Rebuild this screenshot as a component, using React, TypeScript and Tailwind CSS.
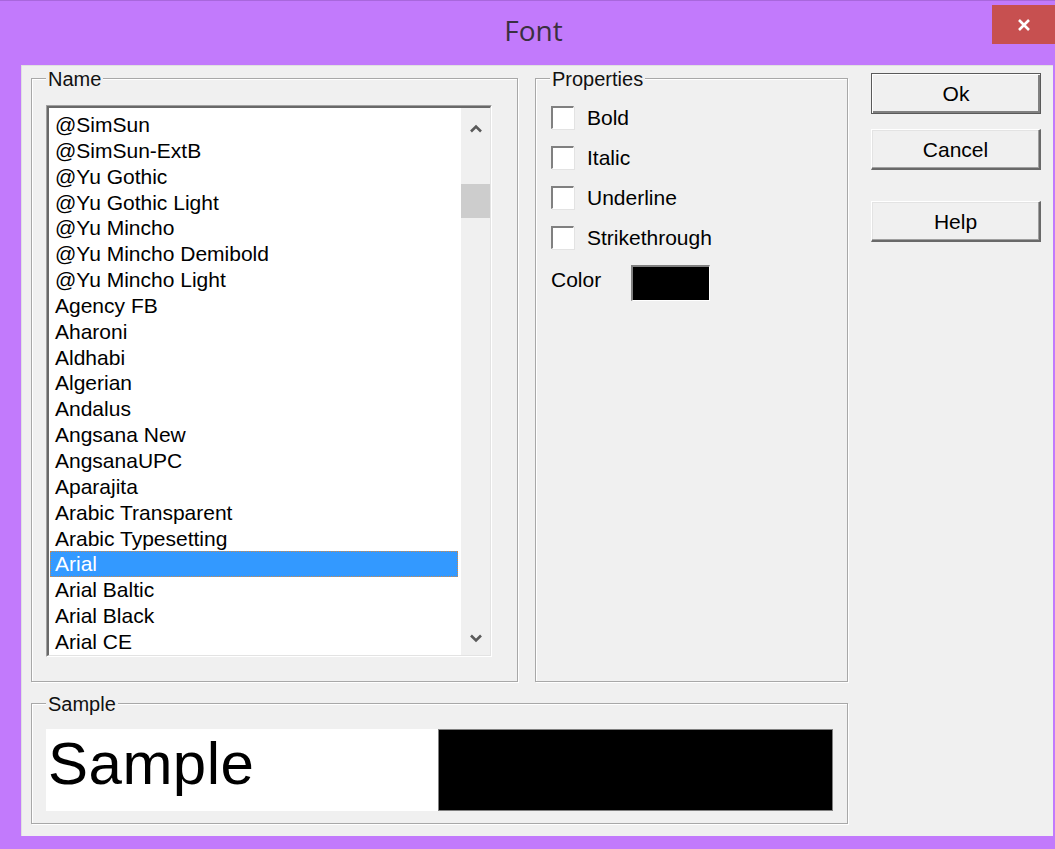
import React from "react";

const FONTS = [
  "@SimSun",
  "@SimSun-ExtB",
  "@Yu Gothic",
  "@Yu Gothic Light",
  "@Yu Mincho",
  "@Yu Mincho Demibold",
  "@Yu Mincho Light",
  "Agency FB",
  "Aharoni",
  "Aldhabi",
  "Algerian",
  "Andalus",
  "Angsana New",
  "AngsanaUPC",
  "Aparajita",
  "Arabic Transparent",
  "Arabic Typesetting",
  "Arial",
  "Arial Baltic",
  "Arial Black",
  "Arial CE",
];

const SELECTED = "Arial";

function Group({
  label,
  className,
  children,
}: {
  label: string;
  className: string;
  children?: React.ReactNode;
}) {
  return (
    <div
      className={`relative border border-[#a8a8a8] shadow-[inset_1px_1px_0_#ffffff,1px_1px_0_#ffffff] ${className}`}
    >
      <span className="absolute left-[14px] -top-[12px] bg-[#f0f0f0] px-[2px] text-[20px] leading-[24px] text-[#111]">
        {label}
      </span>
      {children}
    </div>
  );
}

function Chevron({ up }: { up?: boolean }) {
  return (
    <svg width="14" height="9" viewBox="0 0 14 9">
      <path
        d={up ? "M2 7.5 L7 2.5 L12 7.5" : "M2 1.5 L7 6.5 L12 1.5"}
        fill="none"
        stroke="#5a5a5a"
        strokeWidth="2.6"
      />
    </svg>
  );
}

function Checkbox({ label }: { label: string }) {
  return (
    <div className="flex items-center h-[23px]">
      <div className="w-[23px] h-[23px] border-t-2 border-l-2 border-t-[#808080] border-l-[#808080] border-b border-r border-b-[#ffffff] border-r-[#ffffff] bg-white shadow-[1px_1px_0_#e3e3e3]" />
      <span className="ml-[13px] text-[21px] leading-[23px]">{label}</span>
    </div>
  );
}

function WinButton({ label, isDefault }: { label: string; isDefault?: boolean }) {
  return (
    <button
      className={`w-[170px] h-[41px] bg-[#f0f0f0] text-[21px] leading-none text-black flex items-center justify-center ${
        isDefault
          ? "border border-[#5a5a5a] shadow-[inset_1px_1px_0_#ffffff,inset_-2px_-2px_0_#808080]"
          : "border-t border-l border-t-[#ffffff] border-l-[#ffffff] border-b-2 border-r-2 border-b-[#696969] border-r-[#696969] shadow-[inset_-1px_-1px_0_#a0a0a0,inset_1px_1px_0_#e3e3e3]"
      }`}
    >
      {label}
    </button>
  );
}

export default function App() {
  return (
    <div className="w-[1055px] h-[849px] bg-[#c27afc] flex flex-col overflow-hidden border-t border-[#a867dc] font-['Liberation_Sans',Arial,sans-serif] text-black select-none">
      {/* title bar */}
      <div className="h-[64px] flex items-start shrink-0">
        <div className="flex-1 h-[64px] flex items-center justify-center pl-[75px] pb-[6px] text-[28px] text-[#3a3040] font-['Open_Sans',sans-serif]">
          Font
        </div>
        <div className="w-[63px] h-[39px] mt-[4px] bg-[#c75050] flex items-center justify-center">
          <svg width="14" height="14" viewBox="0 0 14 14">
            <path d="M2 2 L12 12 M12 2 L2 12" stroke="#ffffff" strokeWidth="2.6" />
          </svg>
        </div>
      </div>

      {/* client area */}
      <div className="ml-[21px] mr-[2px] mb-[13px] flex-1 bg-[#f0f0f0] flex border-l border-t border-[#e0e0e0]">
        <div className="pl-[9px] pt-[12px] flex flex-col">
          <div className="flex gap-[17px]">
            {/* font name list */}
            <Group label="Name" className="w-[487px] h-[604px]">
              <div className="ml-[14px] mt-[26px] w-[446px] h-[552px] border-t border-l border-t-[#a0a0a0] border-l-[#a0a0a0] border-b border-r border-b-[#ffffff] border-r-[#ffffff]">
                <div className="w-full h-full flex border-t-2 border-l-2 border-t-[#696969] border-l-[#696969] border-b border-r border-b-[#e3e3e3] border-r-[#e3e3e3]">
                  <div className="flex-1 bg-white overflow-hidden pt-[4px]">
                    {FONTS.map((f) =>
                      f === SELECTED ? (
                        <div
                          key={f}
                          className="h-[25.85px] ml-[1px] mr-[3px] bg-[#3399ff] text-white text-[21px] leading-[23px] pl-[4px] border border-dotted border-[#cf8a4a]"
                        >
                          {f}
                        </div>
                      ) : (
                        <div
                          key={f}
                          className="h-[25.85px] ml-[1px] mr-[3px] text-[21px] leading-[25px] pl-[5px] whitespace-nowrap"
                        >
                          {f}
                        </div>
                      )
                    )}
                  </div>
                  {/* vertical scrollbar */}
                  <div className="w-[29px] bg-[#f0f0f0] flex flex-col">
                    <div className="h-[40px] flex items-center justify-center">
                      <Chevron up />
                    </div>
                    <div className="flex-1">
                      <div className="mt-[36px] h-[34px] bg-[#cdcdcd]" />
                    </div>
                    <div className="h-[34px] flex items-center justify-center">
                      <Chevron />
                    </div>
                  </div>
                </div>
              </div>
            </Group>

            {/* style options */}
            <Group label="Properties" className="w-[313px] h-[604px]">
              <div className="pl-[15px] pt-[27px] flex flex-col gap-[17px]">
                <Checkbox label="Bold" />
                <Checkbox label="Italic" />
                <Checkbox label="Underline" />
                <Checkbox label="Strikethrough" />
              </div>
              <div className="pl-[15px] mt-[16px] flex items-center">
                <span className="text-[21px] leading-[24px] w-[80px] -mt-[6px]">Color</span>
                <div className="w-[79px] h-[36px] bg-black border-t-2 border-l-2 border-t-[#808080] border-l-[#808080] border-b border-r border-b-white border-r-white" />
              </div>
            </Group>
          </div>

          {/* preview */}
          <Group label="Sample" className="mt-[21px] w-[817px] h-[121px]">
            <div className="ml-[14px] mt-[25px] flex h-[82px]">
              <div className="w-[392px] h-full bg-white pl-[2px] pt-[5px] text-[60px] leading-none tracking-[0.5px] overflow-hidden">
                Sample
              </div>
              <div className="w-[395px] h-full bg-black border border-[#808080]" />
            </div>
          </Group>
        </div>

        {/* dialog buttons */}
        <div className="ml-[23px] pt-[7px] flex flex-col">
          <WinButton label="Ok" isDefault />
          <div className="h-[15px]" />
          <WinButton label="Cancel" />
          <div className="h-[31px]" />
          <WinButton label="Help" />
        </div>
      </div>
    </div>
  );
}
